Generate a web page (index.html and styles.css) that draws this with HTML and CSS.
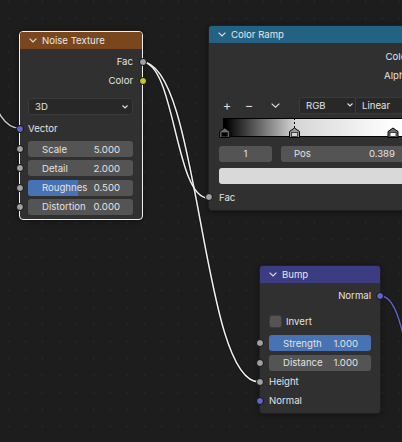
FILE: index.html
```html
<!DOCTYPE html>
<html>
<head>
<meta charset="utf-8">
<link rel="stylesheet" href="styles.css">
</head>
<body>
<div class="canvas">
  <svg class="wires" width="402" height="442" viewBox="0 0 402 442">
    <g class="wire-outline">
      <path d="M-40,55 C-10,55 -11,128 19,128"/>
      <path d="M142,62 C175,62 175,198 208,198"/>
      <path d="M142,62 C200,62 201,382 259,382"/>
      <path d="M381,296 C415,296 411,480 440,480"/>
    </g>
    <path class="wire wire-grey" d="M-40,55 C-10,55 -11,128 19,128"/>
    <path class="wire wire-white" d="M142,62 C175,62 175,198 208,198"/>
    <path class="wire wire-white" d="M142,62 C200,62 201,382 259,382"/>
    <path class="wire wire-purple" d="M381,296 C415,296 411,480 440,480"/>
  </svg>

  <div class="node noise selected">
    <div class="hdr"><svg class="chev" width="8" height="5" viewBox="0 0 8 5"><path d="M0.6,0.6 L4,4 L7.4,0.6"/></svg><span>Noise Texture</span></div>
    <div class="body">
      <div class="row out first">Fac<span class="sock grey"></span></div>
      <div class="row out">Color<span class="sock yellow"></span></div>
      <div class="select"><span>3D</span><svg class="mini" width="6" height="4" viewBox="0 0 6 4"><path d="M0.5,0.5 L3,3 L5.5,0.5"/></svg></div>
      <div class="row in vec"><span class="sock purple"></span>Vector</div>
      <div class="field f1"><span class="sock grey"></span><span class="lbl">Scale</span><span class="val">5.000</span></div>
      <div class="field"><span class="sock grey"></span><span class="lbl">Detail</span><span class="val">2.000</span></div>
      <div class="field"><span class="fill" style="width:48%"></span><span class="sock grey"></span><span class="lbl">Roughnes</span><span class="val">0.500</span></div>
      <div class="field"><span class="sock grey"></span><span class="lbl">Distortion</span><span class="val">0.000</span></div>
    </div>
  </div>

  <div class="node ramp">
    <div class="hdr"><svg class="chev" width="8" height="5" viewBox="0 0 8 5"><path d="M0.6,0.6 L4,4 L7.4,0.6"/></svg><span>Color Ramp</span></div>
    <div class="body">
      <div class="row out first">Color<span class="sock yellow"></span></div>
      <div class="row out">Alpha<span class="sock grey"></span></div>
      <div class="toolbar">
        <span class="tbtn plus">+</span>
        <span class="tbtn minus">−</span>
        <span class="tbtn down"><svg width="9" height="5" viewBox="0 0 9 5"><path d="M0.6,0.6 L4.5,4.2 L8.4,0.6"/></svg></span>
        <div class="combo">
          <div class="seg rgb"><span>RGB</span><svg class="mini" width="6" height="4" viewBox="0 0 6 4"><path d="M0.5,0.5 L3,3 L5.5,0.5"/></svg></div>
          <div class="seg lin"><span>Linear</span></div>
        </div>
      </div>
      <div class="bar">
        <div class="grad"></div>
        <svg class="markers" width="196" height="22" viewBox="0 0 196 22">
          <line class="dash" x1="71.5" y1="0" x2="71.5" y2="10"/>
          <g transform="translate(-3.8,9.5)">
            <polygon class="mk" points="0.5,4 5.5,0.5 10.5,4 10.5,10 0.5,10"/>
            <rect class="sq" x="2.5" y="5" width="6" height="4" fill="#000"/>
          </g>
          <g transform="translate(66,9.5)">
            <polygon class="mk sel" points="0.5,4 5.5,0.5 10.5,4 10.5,10 0.5,10"/>
            <rect class="sq" x="2.5" y="5" width="6" height="4" fill="#d6d6d6"/>
          </g>
          <g transform="translate(164.5,9.5)">
            <polygon class="mk" points="0.5,4 5.5,0.5 10.5,4 10.5,10 0.5,10"/>
            <rect class="sq" x="2.5" y="5" width="6" height="4" fill="#ffffff"/>
          </g>
        </svg>
      </div>
      <div class="pair">
        <div class="field idx"><span class="ctr">1</span></div>
        <div class="field pos"><span class="lbl">Pos</span><span class="val">0.389</span></div>
      </div>
      <div class="swatch"></div>
      <div class="row in fac"><span class="sock grey"></span>Fac</div>
    </div>
  </div>

  <div class="node bump">
    <div class="hdr"><svg class="chev" width="8" height="5" viewBox="0 0 8 5"><path d="M0.6,0.6 L4,4 L7.4,0.6"/></svg><span>Bump</span></div>
    <div class="body">
      <div class="row out first">Normal<span class="sock purple"></span></div>
      <div class="check"><span class="box"></span><span>Invert</span></div>
      <div class="field blue f-str"><span class="sock grey"></span><span class="lbl">Strength</span><span class="val">1.000</span></div>
      <div class="field f-dist"><span class="sock grey"></span><span class="lbl">Distance</span><span class="val">1.000</span></div>
      <div class="row in h"><span class="sock grey"></span>Height</div>
      <div class="row in"><span class="sock purple"></span>Normal</div>
    </div>
  </div>
</div>
</body>
</html>
```

FILE: styles.css
```css
* { box-sizing: border-box; }
html, body { margin: 0; padding: 0; background: #1d1d1d; }
body {
  font-family: "Inter", "DejaVu Sans", sans-serif;
  font-size: 9.6px;
  color: #e2e2e2;
}
.canvas {
  position: relative;
  width: 402px;
  height: 442px;
  overflow: hidden;
  background-color: #1d1d1d;
  background-image: radial-gradient(circle, #252525 0.9px, transparent 1.3px);
  background-size: 17px 17px;
  background-position: 0px -7px;
}
.wires { position: absolute; left: 0; top: 0; z-index: 0; }
.wire-outline path { fill: none; stroke: #141414; stroke-width: 3.2; }
.wire { fill: none; stroke-width: 1.5; }
.wire-grey { stroke: #c9c9cf; }
.wire-white { stroke: #f0f0f0; }
.wire-purple { stroke: #6363c7; }

.node {
  position: absolute;
  z-index: 1;
  background: #303030;
  border: 1px solid #202020;
  border-radius: 4px;
  box-shadow: 0 1px 5px rgba(0,0,0,0.45);
}
.node.selected { border-color: #f0f0f0; }
.hdr {
  height: 17px;
  display: flex;
  align-items: center;
  padding-left: 9px;
  gap: 5px;
  color: #e6e6e6;
  border-radius: 3px 3px 0 0;
}
.chev path, .mini path, .tbtn svg path { fill: none; stroke: #dcdcdc; stroke-width: 1.2; }
.noise { left: 19px; top: 31px; width: 124px; }
.noise .hdr { background: #79461d; }
.noise .body { padding: 0 9px 4px 8px; }
.ramp { left: 208px; top: 25px; width: 213px; }
.ramp .hdr { background: #246283; }
.ramp .body { padding: 0 10px 3px 10px; }
.bump { left: 259px; top: 265px; width: 122px; }
.bump .hdr { background: #3c3c83; }
.bump .body { padding: 0 9px 3px 9px; }

.row {
  position: relative;
  height: 19px;
  line-height: 19px;
  white-space: nowrap;
}
.row.out { text-align: right; }
.noise .row.first { margin-top: 3px; }
.ramp .row.first { margin-top: 3.5px; }
.bump .row.first { margin-top: 3px; }

.sock {
  position: absolute;
  top: 50%;
  width: 8px;
  height: 8px;
  margin-top: -4px;
  border-radius: 50%;
  border: 1px solid #111;
}
.sock.grey { background: #a1a1a1; }
.sock.yellow { background: #c7c729; }
.sock.purple { background: #6363c7; }
.noise .out .sock { right: -14px; }
.noise .in .sock, .noise .field .sock { left: -12.5px; }
.ramp .out .sock { right: -14px; }
.ramp .in .sock { left: -14px; }
.bump .out .sock { right: -13px; }
.bump .in .sock, .bump .field .sock { left: -13.5px; }

.select {
  margin-top: 8px;
  height: 17px;
  background: #282828;
  border: 1px solid #3a3a3a;
  border-radius: 3px;
  display: flex;
  align-items: center;
  justify-content: space-between;
  padding: 0 4px 0 6px;
}
.noise .vec { margin-top: 4px; }

.field {
  position: relative;
  height: 16px;
  background: #545454;
  border-radius: 3px;
  display: flex;
  align-items: center;
  justify-content: space-between;
  padding: 0 13px 0 14px;
  margin-top: 3.3px;
  white-space: nowrap;
}
.field .lbl, .field .val, .field .ctr { position: relative; z-index: 1; }
.field .fill {
  position: absolute;
  left: 0; top: 0; bottom: 0;
  background: #4772b3;
  border-radius: 3px 0 0 3px;
}
.field.blue { background: #4772b3; }
.noise .f1 { margin-top: 3px; }

.toolbar {
  margin-top: 12px;
  height: 17px;
  display: flex;
  align-items: center;
}
.tbtn {
  display: flex;
  align-items: center;
  justify-content: center;
  font-size: 13px;
  color: #dcdcdc;
  height: 17px;
}
.tbtn.plus { width: 16px; margin-left: 0; }
.tbtn.minus { width: 16px; margin-left: 6px; }
.tbtn.down { width: 16px; margin-left: 10px; }
.combo {
  margin-left: 16px;
  flex: 1;
  height: 17px;
  display: flex;
  background: #282828;
  border: 1px solid #3a3a3a;
  border-radius: 3px;
}
.seg { display: flex; align-items: center; height: 100%; }
.seg.rgb { width: 56px; padding: 0 2px 0 6px; justify-content: space-between; border-right: 1px solid #3a3a3a; }
.seg.lin { padding-left: 6px; }

.bar {
  position: relative;
  margin: 4px 4px 0 4px;
  height: 19px;
}
.grad {
  position: absolute;
  left: 0; right: 0; top: 0; bottom: 0;
  border: 1px solid #000;
  background: linear-gradient(to right, #000 1.7px, #d6d6d6 71.5px, #ffffff 170px, #ffffff 100%);
}
.markers { position: absolute; left: 0; top: 0; overflow: visible; }
.markers .dash { stroke: #000; stroke-width: 1; stroke-dasharray: 2 2; }
.mk { fill: #6e6e6e; stroke: #000; stroke-width: 1; }
.mk.sel { fill: #9a9a9a; }
.sq { stroke: #2a2a2a; stroke-width: 0.8; }

.pair { display: flex; gap: 9px; margin-top: 9px; }
.pair .field { margin-top: 0; }
.field.idx { width: 53px; justify-content: center; padding: 0; }
.field.pos { flex: 1; padding: 0 15px 0 13px; }
.swatch {
  margin-top: 6px;
  height: 16px;
  background: #d9d9d9;
  border-radius: 3px;
}
.ramp .fac { margin-top: 4px; }

.check {
  margin-top: 7px;
  height: 19px;
  display: flex;
  align-items: center;
  gap: 4px;
}
.check .box {
  width: 13px;
  height: 13px;
  background: #545454;
  border-radius: 3px;
  border: 1px solid #3c3c3c;
}
.bump .f-str { margin-top: 4px; }
.bump .f-dist { margin-top: 3.5px; }
.bump .h { margin-top: 1.5px; }
```
